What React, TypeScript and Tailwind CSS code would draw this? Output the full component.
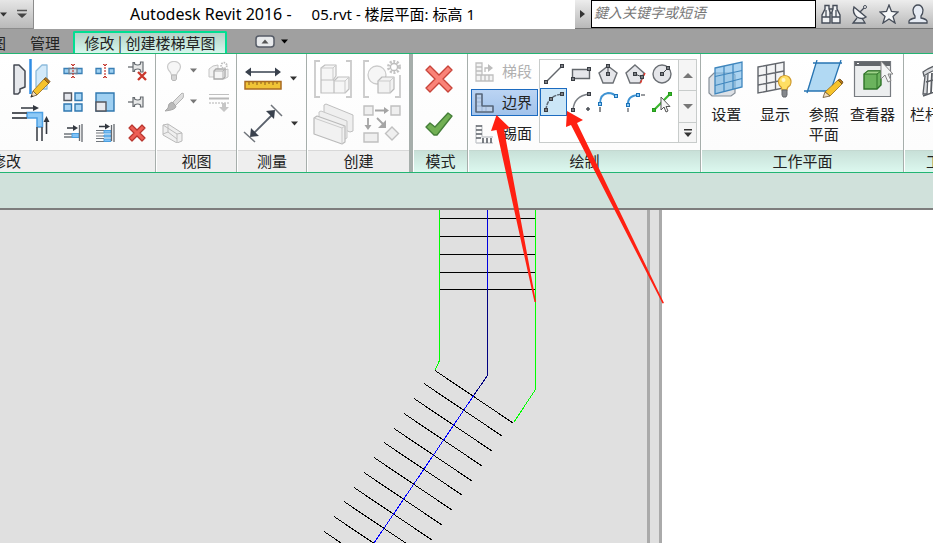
import type { ReactNode } from "react";
import clsx from "clsx";

type IconProps = { w?: number; h?: number; children: ReactNode };

function Icon({ w = 20, h = 20, children }: IconProps) {
  return (
    <svg width={w} height={h} viewBox={`0 0 ${w} ${h}`} fill="none" className="shrink-0" aria-hidden="true">
      {children}
    </svg>
  );
}

function Caret({ className = "text-[#333]" }: { className?: string }) {
  return (
    <svg width="7" height="5" viewBox="0 0 7 5" className={clsx("shrink-0", className)} aria-hidden="true">
      <path d="M0 0.5h7L3.5 4.5z" fill="currentColor" />
    </svg>
  );
}

/* ---------- Modify icons ---------- */

const MirrorIcon = () => (
  <Icon w={40} h={42}>
    <path d="M3 6h5l6 6v16l-5 2v3l-2 2H3z" fill="#e6e8ec" stroke="#454a53" strokeWidth="1.500" strokeLinejoin="round" />
    <path d="M36 6h-5l-6 6v16l5 2h6z" fill="#d3eafa" stroke="#8dbbdb" strokeWidth="1.300" strokeLinejoin="round" />
    <path d="M19.500 0v35" stroke="#2f8de4" strokeWidth="2.500" />
    <path d="M22 32L33 20l5 4-12 12z" fill="#f6c32c" stroke="#94691c" strokeWidth=".8" />
    <path d="M33 20l2-1.500 4 4-1.500 2z" fill="#b4761a" stroke="#6c4a16" strokeWidth=".8" />
    <path d="M20 38l2-6 4 4z" fill="#f3dfbd" stroke="#6b5430" strokeWidth=".8" />
    <path d="M19.500 38.500l1-3 2 2z" fill="#333" />
  </Icon>
);

const TrimIcon = () => (
  <Icon w={40} h={40}>
    <path d="M10 3h14M35.500 29V15" stroke="#333840" strokeWidth="1.600" />
    <path d="M22 0l6 3-6 3zM32.500 17l3-6 3 6z" fill="#333840" />
    <path d="M16 7.500h15.500V22h-5.500v-9H16z" fill="#8fcaf6" stroke="#4da0e4" strokeWidth="1.500" />
    <path d="M1 8h15M1 13h15M26 22v14M31 22v14" stroke="#55595f" strokeWidth="1.800" />
  </Icon>
);

const SplitIcon = () => (
  <Icon>
    <path d="M1 7.500h6v5H1zM13 7.500h6v5h-6z" fill="#9ed0f2" stroke="#3a7fb5" strokeWidth="1.300" />
    <path d="M6 7.500h8v5H6z" fill="#d3e1ec" stroke="#6d8093" strokeWidth="1.300" />
    <path d="M10 3v14" stroke="#c4362c" strokeWidth="1.200" strokeDasharray="2 1" />
    <path d="M8 3l2 2 2-2M8 17l2-2 2 2" stroke="#c4362c" />
  </Icon>
);

const SplitGapIcon = () => (
  <Icon>
    <path d="M1 7.500h5v5H1zM14 7.500h5v5h-5z" fill="#9ed0f2" stroke="#3a7fb5" strokeWidth="1.300" />
    <path d="M10 3v14" stroke="#c4362c" strokeWidth="1.200" strokeDasharray="2 1" />
    <path d="M8 3l2 2 2-2M8 17l2-2 2 2" stroke="#c4362c" />
  </Icon>
);

function PushPin() {
  return (
    <>
      <path d="M1 10h5" stroke="#666b70" strokeWidth="1.300" />
      <path d="M6 5.500h1.500V7q3.500 2 6 0V5h2.500v10h-2.500v-2q-2.500-2-6 0v1.500H6z" fill="#e7e8e8" stroke="#666b70" strokeWidth="1.200" />
    </>
  );
}

const UnpinIcon = () => (
  <Icon>
    <g transform="translate(0 -4)"><PushPin /></g>
    <path d="M11 11l8 8M19 11l-8 8" stroke="#c9372b" strokeWidth="2.300" />
  </Icon>
);

const PinIcon = () => (
  <Icon>
    <PushPin />
  </Icon>
);

const ArrayIcon = () => (
  <Icon>
    <path d="M1 1h7.500v7.500H1z" fill="#e4e6ec" stroke="#55575e" strokeWidth="1.400" />
    <path d="M12 1h7v7.500h-7zM1 12h7.500v7H1zM12 12h7v7h-7z" fill="#a9d6f5" stroke="#3078b0" strokeWidth="1.400" />
  </Icon>
);

const ScaleIcon = () => (
  <Icon>
    <path d="M1 1h18v18H1z" fill="#9fd0f2" stroke="#3078b0" strokeWidth="1.400" />
    <path d="M1 10h10v9H1z" fill="#e9eaee" stroke="#55575e" strokeWidth="1.400" />
  </Icon>
);

const ExtendIcon = () => (
  <Icon>
    <path d="M4 5h8" stroke="#333840" strokeWidth="1.500" />
    <path d="M10 2l5 3-5 3z" fill="#333840" />
    <path d="M1 11h8M1 14h8" stroke="#70757b" strokeWidth="1.300" />
    <path d="M9 10.500h7v4H9z" fill="#7fc1f6" stroke="#4a9fe0" />
    <path d="M16.500 2v16M19 1v18" stroke="#666a70" strokeWidth="1.300" />
  </Icon>
);

const ExtendManyIcon = () => (
  <Icon>
    <path d="M4 3.500h8" stroke="#333840" strokeWidth="1.500" />
    <path d="M10 .5l5 3-5 3z" fill="#333840" />
    <path d="M1 7.500h8M1 10h8M1 13h8M1 15.500h8M1 18.500h8" stroke="#70757b" strokeWidth="1.100" />
    <path d="M9 7.500h7V10H9zM9 12h7v2H9zM9 16h7v2.500H9z" fill="#7fc1f6" stroke="#4a9fe0" />
    <path d="M16.500 2v16M19 1v18" stroke="#666a70" strokeWidth="1.300" />
  </Icon>
);

const DeleteIcon = () => (
  <Icon>
    <path
      d="M5 2l5 5 5-5 3 3-5 5 5 5-3 3-5-5-5 5-3-3 5-5-5-5z"
      fill="#ed5f55"
      stroke="#b8352e"
      strokeWidth="1.200"
      strokeLinejoin="round"
    />
  </Icon>
);

/* ---------- View icons (disabled) ---------- */

const BulbIcon = () => (
  <Icon>
    <path d="M7.500 14q-.5-2.500-3-5Q2 4 6 1.500q4-2 8 0Q18 4 15.500 9q-2.500 2.500-3 5z" fill="#f6f6f6" stroke="#cacaca" strokeWidth="1.200" />
    <path d="M7.500 14h5v4l-1 1.500h-3l-1-1.500z" fill="#d6d6d6" stroke="#b8b8b8" />
  </Icon>
);

const HideCubeIcon = () => (
  <Icon w={22}>
    <path d="M1 8l4-3 5-1v4l-3 8H1zM17 9l3-1v8l-4 2" fill="#f1f1f1" stroke="#c5c5c5" />
    <path d="M6 10l2-2h9v8l-2 2H6z" fill="#f4f4f4" stroke="#a8a8a8" strokeWidth="1.300" />
    <path d="M6 10h9v8M15 10l2-2" stroke="#b0b0b0" />
    <circle cx="16" cy="4.500" r="2.800" fill="#fff" stroke="#bdbdbd" strokeWidth="1.800" strokeDasharray="1.500 1" />
  </Icon>
);

const BrushIcon = () => (
  <Icon>
    <path d="M9 10L18 1l2 1-1 4-8 8z" fill="#dedede" stroke="#b4b4b4" />
    <path d="M8 10l4 4q0 4-11 5l3-3q0-5 4-6z" fill="#b9b9b9" stroke="#a8a8a8" />
  </Icon>
);

const LineworkIcon = () => (
  <Icon w={22}>
    <path d="M1 2.500h20" stroke="#c0c0c0" />
    <path d="M1 6.500h20" stroke="#b8b8b8" strokeWidth="2" />
    <path d="M1 11h20" stroke="#b2b2b2" strokeDasharray="2 1" />
    <path d="M14 11h4v4h3l-5 5-5-5h3z" fill="#c6c6c6" />
  </Icon>
);

const SelectionBoxIcon = () => (
  <Icon w={22}>
    <path d="M1 2l5-1 14 9v8l-5 2L1 12z" fill="#efefef" stroke="#b9b9b9" strokeLinejoin="round" />
    <path d="M1 2l14 9 5-1M15 11v9M6 1v8l9 7M6 9l-5 2" stroke="#bdbdbd" />
  </Icon>
);

/* ---------- Measure icons ---------- */

const RulerIcon = () => (
  <Icon w={38} h={26}>
    <path d="M5 6h28" stroke="#59606b" strokeWidth="1.800" />
    <path d="M7 1.500v9L1 6zM31 1.500v9L37 6z" fill="#39414d" />
    <path d="M1 15.500h36v7.500H1z" fill="#f0c437" stroke="#a96b22" strokeWidth="1.500" />
    <path d="M5 16v3M9 16v2M13 16v3M17 16v2M21 16v3M25 16v2M29 16v3M33 16v2" stroke="#8b5b1d" />
  </Icon>
);

const AlignedDimensionIcon = () => (
  <Icon w={40} h={40}>
    <path d="M9 31L30 10" stroke="#59606b" strokeWidth="1.800" />
    <path d="M7 33l1-9 8 8zM32 6l-9 1 8 8z" fill="#39414d" />
    <path d="M1 28l11 10M28 1l11 11" stroke="#70757b" strokeWidth="1.500" />
  </Icon>
);

/* ---------- Create icons (disabled) ---------- */

const GroupIcon = () => (
  <Icon w={40} h={40}>
    <path d="M7 2H2v36h5M33 2h5v36h-5" stroke="#cbcbcb" strokeWidth="1.800" />
    <path d="M8 9l4-3h11v11l-3 4H8zM8 21h13v13H8zM21 22l4-4h11v12l-4 4H21z" fill="#f6f6f6" stroke="#bfbfbf" strokeWidth="1.200" strokeLinejoin="round" />
    <path d="M8 9h12l3-3M20 9v12M21 22h11l4-4M32 22v12" stroke="#cbcbcb" />
  </Icon>
);

const AssemblyIcon = () => (
  <Icon w={40} h={40}>
    <path d="M7 2H2v36h5M38 16v22h-5" stroke="#cbcbcb" strokeWidth="1.800" />
    <circle cx="15" cy="16" r="9" fill="#f6f6f6" stroke="#cbcbcb" strokeWidth="1.300" />
    <path d="M16 22l4-4h12v12l-4 4H16z" fill="#f2f2f2" stroke="#b8b8b8" strokeWidth="1.200" strokeLinejoin="round" />
    <path d="M16 22h12l4-4M28 22v12" stroke="#cbcbcb" />
    <circle cx="32" cy="8" r="5.500" stroke="#c4c4c4" strokeWidth="3" strokeDasharray="2 1.500" />
    <circle cx="32" cy="8" r="3.500" fill="#fff" stroke="#bdbdbd" strokeWidth="1.300" />
  </Icon>
);

const PartsIcon = () => (
  <Icon w={42} h={42}>
    <path d="M12 2l2-1 27 11v16l-3 1-26-11z" fill="#efefef" stroke="#bfbfbf" strokeLinejoin="round" />
    <path d="M7 9l2-1 26 10v17l-2 1L7 26z" fill="#efefef" stroke="#c7c7c7" strokeLinejoin="round" />
    <path d="M2 15l3-2 28 10v16l-3 2L2 31z" fill="#f1f1f1" stroke="#bababa" strokeWidth="1.200" strokeLinejoin="round" />
    <path d="M2 15l28 10 3-2M30 25v16" stroke="#cbcbcb" />
  </Icon>
);

const SimilarIcon = () => (
  <Icon w={40} h={40}>
    <path d="M2 2h9v9H2zM29 2h9v9h-9zM2 29h14v9H2zM30 23l6.500 6.500L30 36l-6.500-6.500z" fill="#efefef" stroke="#c0c0c0" strokeWidth="1.400" />
    <path d="M13 6.500h10M6 14v8M15 14l6 6" stroke="#a5a5a5" strokeWidth="1.800" />
    <path d="M22 3l5 3.500-5 3.500zM2.500 21h7L6 26zM24 16v8h-8z" fill="#a5a5a5" />
  </Icon>
);

/* ---------- Mode icons ---------- */

const CancelIcon = () => (
  <Icon w={30} h={30}>
    <path
      d="M6 2l9 9 9-9 4 4-9 9 9 9-4 4-9-9-9 9-4-4 9-9-9-9z"
      fill="#fa8378"
      stroke="#c8443b"
      strokeWidth="1.400"
      strokeLinejoin="round"
    />
  </Icon>
);

const FinishIcon = () => (
  <Icon w={30} h={30}>
    <path
      d="M2 18l4-4 5 4L24 4l4 3-15 19h-3z"
      fill="#72b054"
      stroke="#457f39"
      strokeWidth="1.400"
      strokeLinejoin="round"
    />
  </Icon>
);

/* ---------- Draw icons ---------- */

const RunIcon = () => (
  <Icon>
    <path d="M2 1h6v12h11v6H2z" fill="#f4f4f4" stroke="#c0c0c0" strokeWidth="1.300" />
    <path d="M2 5h6M2 9h6M2 13h6M7 13v6M11 13v6M15 13v6M11 10V6h5" stroke="#bdbdbd" strokeWidth="1.300" />
    <path d="M14 2l5 4-5 4z" fill="#bdbdbd" />
  </Icon>
);

const BoundaryIcon = () => (
  <Icon>
    <path d="M2 1h6v12h11v6H2z" fill="#bcd0ea" stroke="#56657a" strokeWidth="1.600" strokeLinejoin="round" />
    <path d="M3 5h4M3 9h4M3 13h4M8 14v4M12 14v4" stroke="#98b2d3" />
  </Icon>
);

const RiserIcon = () => (
  <Icon>
    <path d="M2 1v18M8 1v12h11M2 19h17" stroke="#c6c9cd" strokeWidth="1.300" />
    <path d="M2 2h6M2 6h6M2 10h6M2 14h5M9 14v5M13 14v5M17 14v5" stroke="#5b6067" strokeWidth="1.600" />
  </Icon>
);

const Node = ({ x, y, blue, green }: { x: number; y: number; blue?: boolean; green?: boolean }) => (
  <rect
    x={x - 1.5}
    y={y - 1.5}
    width="3"
    height="3"
    fill={blue ? "#8ec9f5" : green ? "#36b52a" : "#7d8085"}
    stroke={blue ? "#1a72b8" : green ? "#259a1b" : "#3a3e44"}
  />
);

const drawTools = [
  {
    name: "线",
    icon: (
      <Icon w={22} h={22}>
        <path d="M3 19L19 3" stroke="#63676c" strokeWidth="1.500" />
        <Node x={3} y={19} />
        <Node x={19} y={3} />
      </Icon>
    ),
  },
  {
    name: "矩形",
    icon: (
      <Icon w={22} h={22}>
        <path d="M2.500 6.500h17v9h-17z" fill="#e5e6ea" stroke="#63676c" strokeWidth="1.400" />
        <Node x={3} y={16} />
        <Node x={19} y={6} />
      </Icon>
    ),
  },
  {
    name: "内接多边形",
    icon: (
      <Icon w={22} h={22}>
        <path d="M11 3l9 7-4 10H6L2 10z" fill="#e5e6ea" stroke="#6b6f74" strokeWidth="1.400" />
        <path d="M11 3v8" stroke="#43474d" />
        <Node x={11} y={3} />
        <Node x={11} y={11} />
      </Icon>
    ),
  },
  {
    name: "外接多边形",
    icon: (
      <Icon w={22} h={22}>
        <path d="M11 2l9 8-4 10H6L2 10z" fill="#e5e6ea" stroke="#6b6f74" strokeWidth="1.400" />
        <path d="M11 11l7 3" stroke="#43474d" />
        <path d="M21 10l-5 11" stroke="#df382d" strokeWidth="1.500" strokeDasharray="3 1" />
        <Node x={11} y={11} />
        <Node x={18} y={14} />
      </Icon>
    ),
  },
  {
    name: "圆形",
    icon: (
      <Icon w={22} h={22}>
        <circle cx="11" cy="11" r="9" fill="#e5e6ea" stroke="#6b6f74" strokeWidth="1.400" />
        <path d="M11 11l6-6" stroke="#43474d" />
        <Node x={11} y={11} />
        <Node x={17} y={5} />
      </Icon>
    ),
  },
  {
    name: "起点-终点-半径弧",
    icon: (
      <Icon w={22} h={22}>
        <path d="M3 19Q4 5 19 3" stroke="#5c6975" strokeWidth="1.500" strokeDasharray="4 1" />
        <Node x={3} y={19} />
        <Node x={8} y={8} />
        <Node x={19} y={3} />
      </Icon>
    ),
  },
  {
    name: "圆心-端点弧",
    icon: (
      <Icon w={22} h={22}>
        <path d="M3 19Q4 5 19 3" stroke="#7c8086" strokeWidth="1.500" />
        <path d="M18 16v4M16 18h4" stroke="#4b4f55" strokeWidth="1.500" />
        <Node x={3} y={19} />
        <Node x={19} y={3} />
      </Icon>
    ),
  },
  {
    name: "相切-端点弧",
    icon: (
      <Icon w={22} h={22}>
        <path d="M3 13Q3 3 11 2q6 0 8 4" stroke="#3f93d3" strokeWidth="1.800" />
        <path d="M3 16v5" stroke="#63676c" strokeWidth="1.500" />
        <Node x={3} y={13} blue />
        <Node x={19} y={5} blue />
      </Icon>
    ),
  },
  {
    name: "圆角弧",
    icon: (
      <Icon w={22} h={22}>
        <path d="M4 14Q3 5 14 4" stroke="#3f93d3" strokeWidth="1.800" />
        <path d="M4 17v4M17 4h4" stroke="#777b80" strokeWidth="1.500" />
        <Node x={4} y={14} blue />
        <Node x={14} y={4} blue />
      </Icon>
    ),
  },
  {
    name: "拾取线",
    icon: (
      <Icon w={22} h={22}>
        <path d="M3 19L19 3" stroke="#3ab62d" strokeWidth="2.200" />
        <Node x={3} y={19} green />
        <Node x={19} y={3} green />
        <path d="M10 6v13l3-3 2 5 2-1-2-4.500h4z" fill="#f6f6f6" stroke="#555" />
      </Icon>
    ),
  },
];

/* ---------- Work plane icons ---------- */

const SetPlaneIcon = () => (
  <Icon w={38} h={38}>
    <path d="M2 18l5-5h19l2 2v18l-4 3H5l-3-3z" fill="#dde1e6" stroke="#868f98" strokeWidth="1.200" />
    <path d="M8 8l27-6v25L8 34z" fill="#7fbdea" fillOpacity=".65" stroke="#3f86bd" strokeWidth="1.300" />
    <path d="M17 6v26M26 4v25M8 16.500l27-6M8 25.500l27-7" stroke="#3f86bd" strokeWidth="1.200" />
  </Icon>
);

const ShowPlaneIcon = () => (
  <Icon w={38} h={38}>
    <path d="M2 7l26-5v26L2 33z" fill="#f3f4f5" stroke="#62666c" strokeWidth="1.400" />
    <path d="M10.500 5.500v26M19.500 4v26M2 16l26-5M2 25l26-5" stroke="#62666c" strokeWidth="1.300" />
    <path d="M26 30q0-3-2.500-4.500-2.500-5 1-8.500 4.500-3 8.500 0 3.500 4 1 8.500Q31 27 31 30z" fill="#ffdf63" stroke="#cf9a2c" strokeWidth="1.200" />
    <path d="M26 30h5v5l-1 2h-3l-1-2z" fill="#85888c" stroke="#63666a" />
    <circle cx="27.500" cy="20" r="2" fill="#fff7c8" />
  </Icon>
);

const RefPlaneIcon = () => (
  <Icon w={40} h={38}>
    <path d="M12 3h24L26 31H3z" fill="#b1d9f3" />
    <path d="M9 3h29M13 0L3 33M37 0L26 33M0 31h27" stroke="#2774b2" strokeWidth="1.300" />
    <path d="M21 32l13-12 4 4-12 12z" fill="#f6c32c" stroke="#94691c" strokeWidth=".8" />
    <path d="M19 37.500l2-5.500 5 4z" fill="#f3dfbd" stroke="#6b5430" strokeWidth=".8" />
    <path d="M34 20l2-1 3 3-1 2z" fill="#b4761a" stroke="#6c4a16" strokeWidth=".8" />
  </Icon>
);

const ViewerIcon = () => (
  <Icon w={40} h={38}>
    <path d="M1.500 1.500h36v35h-36z" fill="#eceeef" stroke="#777b80" strokeWidth="1.200" />
    <path d="M2 1.500h35V6H2z" fill="#63676c" />
    <path d="M4 3.500h2" stroke="#fff" />
    <path d="M11 14l4-3h13v14l-4 4H11z" fill="#6bb35d" stroke="#2e7429" strokeWidth="1.400" />
    <path d="M11 14l4-3h13l-4 3z" fill="#a0d38a" stroke="#2e7429" />
    <path d="M24 14v15" stroke="#2e7429" />
    <path d="M28 1v18l4-4 3 7 3-1.500-3-6.500h5z" fill="#f4f5f6" stroke="#858585" />
  </Icon>
);

const RailingIcon = () => (
  <Icon w={38} h={38}>
    <path d="M2 12Q14 3 36 2v4Q15 7 3 16z" fill="#d8dadd" stroke="#5a5e64" strokeWidth="1.300" />
    <path d="M4 16L2 34h4l1-20" fill="#d8dadd" stroke="#5a5e64" strokeWidth="1.300" />
    <path d="M11 13l-1 20M15 11l-1 20M23 8v20M30 7v19" stroke="#5a5e64" strokeWidth="1.800" />
    <path d="M2 36l35-12M5 22l32-9" stroke="#5a5e64" strokeWidth="1.500" />
  </Icon>
);

/* ---------- Title bar icons ---------- */

const BinocularsIcon = () => (
  <Icon>
    <path d="M4 1.500h4V5l1 3v11H1v-8l3-6zM12 1.500h4V5l3 6v8h-8V8l1-3z" fill="#f0f2f4" stroke="#464d59" strokeWidth="1.400" />
    <path d="M8 5h4M9 9h2M1 13h8M11 13h8M5 6v7M15 6v7" stroke="#464d59" strokeWidth="1.300" />
  </Icon>
);

const SatelliteIcon = () => (
  <Icon>
    <path d="M7 14l-4 5h12l-3-5" fill="#d5d9dd" stroke="#464d59" strokeWidth="1.300" />
    <path d="M4 3l12 10q-4 3-9 0-5-4-3-10z" fill="#f4f5f7" stroke="#464d59" strokeWidth="1.400" />
    <path d="M10 8l4-4" stroke="#464d59" strokeWidth="1.300" />
    <circle cx="15" cy="3" r="1.500" fill="#fff" stroke="#464d59" />
  </Icon>
);

const StarIcon = () => (
  <Icon>
    <path d="M10 1l2.500 6.500 6.500.5-5 4.500 2 6.500-6-4-6 4 2-6.500L1 8l6.500-.5z" fill="#f7f8f9" stroke="#464d59" strokeWidth="1.300" />
  </Icon>
);

const UserIcon = () => (
  <Icon>
    <path d="M1 19v-2q1-2 6-3v-2Q5 10 5 6q1-5 5-5t5 5q0 4-2 6v2q5 1 6 3v2z" fill="#e6ebf3" stroke="#464d59" strokeWidth="1.300" />
  </Icon>
);

/* ---------- Layout ---------- */

type PanelProps = { title: string; className: string; contextual?: boolean; titleClass?: string; children: ReactNode };

function Panel({ title, className, contextual, titleClass = "text-center", children }: PanelProps) {
  return (
    <section className={clsx("mr-px flex shrink-0 flex-col border-[#a6aeab]", className)}>
      <div className="h-24 bg-gradient-to-b from-white to-[#fcfcfc]">{children}</div>
      <h2
        className={clsx(
          "h-[22px] overflow-hidden border-t text-[15px] leading-5 whitespace-nowrap",
          contextual
            ? "border-[#c3d8d0] bg-gradient-to-b from-[#c8e0d8] to-[#dcf8ef]"
            : "border-[#d8d8d8] bg-[#eeeeee]",
          titleClass
        )}
      >
        {title}
      </h2>
    </section>
  );
}

function Tool({ label, className, children }: { label: string; className?: string; children: ReactNode }) {
  return (
    <button type="button" aria-label={label} className={clsx("flex items-center justify-center", className)}>
      {children}
    </button>
  );
}

const modifyTools = [
  { name: "拆分图元", icon: <SplitIcon /> },
  { name: "用间隙拆分", icon: <SplitGapIcon /> },
  { name: "解锁", icon: <UnpinIcon /> },
  { name: "阵列", icon: <ArrayIcon /> },
  { name: "缩放", icon: <ScaleIcon /> },
  { name: "锁定", icon: <PinIcon /> },
  { name: "修剪/延伸单个图元", icon: <ExtendIcon /> },
  { name: "修剪/延伸多个图元", icon: <ExtendManyIcon /> },
  { name: "删除", icon: <DeleteIcon /> },
];

const planeTools = [
  { lines: ["设置"], icon: <SetPlaneIcon /> },
  { lines: ["显示"], icon: <ShowPlaneIcon /> },
  { lines: ["参照", "平面"], icon: <RefPlaneIcon /> },
  { lines: ["查看器"], icon: <ViewerIcon /> },
];

function TitleBar() {
  return (
    <header className="flex h-[29px] items-start bg-white">
      <div className="flex h-[29px] w-[34px] shrink-0 items-center justify-between border-r border-b border-[#8c8c8c] bg-gradient-to-b from-[#e6e6e6] to-[#b9b9b9] pr-[5px]">
        <button type="button" aria-label="更多">
          <Caret />
        </button>
        <button type="button" aria-label="自定义快速访问工具栏">
          <Icon w={12} h={10}>
            <path d="M1 1.500h10" stroke="#555" strokeWidth="1.500" />
            <path d="M1 4.500h10L6 9z" fill="#444" />
          </Icon>
        </button>
      </div>
      <h1 className="flex min-w-0 flex-1 gap-5 overflow-hidden pl-24 font-['Noto_Sans','Noto_Sans_CJK_SC',sans-serif] text-[15px] leading-[29px] whitespace-nowrap text-black">
        <span className="text-[16px]">Autodesk Revit 2016 -</span>
        <span>05.rvt - 楼层平面: 标高 1</span>
      </h1>
      <div className="flex h-[29px] w-[358px] shrink-0 items-start border-b border-[#777] bg-gradient-to-b from-[#ededed] to-[#b8b8b8]">
        <button type="button" aria-label="展开" className="flex h-7 w-4 items-center justify-center">
          <Icon w={6} h={8}>
            <path d="M0 0v8l5-4z" fill="#333" />
          </Icon>
        </button>
        <input
          type="text"
          aria-label="搜索"
          placeholder="鍵入关键字或短语"
          className="h-7 w-[225px] border border-black bg-white px-[2px] pb-1 text-[14px] italic outline-none placeholder:text-[#777]"
        />
        <div className="flex h-7 flex-1 items-center justify-around">
          <Tool label="搜索"><BinocularsIcon /></Tool>
          <Tool label="通讯中心"><SatelliteIcon /></Tool>
          <Tool label="收藏夹"><StarIcon /></Tool>
          <Tool label="登录"><UserIcon /></Tool>
        </div>
      </div>
    </header>
  );
}

function Tabs() {
  return (
    <nav className="flex h-[25px] items-end border-b border-[#22b573] bg-[#a0a0a0] text-[15px] leading-[21px]">
      <button type="button" className="-ml-[9px] w-[39px] text-left">图</button>
      <button type="button" className="w-[43px] text-left">管理</button>
      <button
        type="button"
        className="w-[154px] rounded-t-xs border-2 border-b-0 border-[#00df92] bg-gradient-to-b from-[#b4d2c7] to-[#d6f7ed] leading-5 whitespace-nowrap"
      >
        修改 | 创建楼梯草图
      </button>
      <button type="button" aria-label="最小化功能区" className="ml-7 flex h-6 items-center gap-[6px]">
        <Icon w={20} h={13}>
          <rect x="1" y="1" width="18" height="11" rx="3" fill="#e8eaec" stroke="#555b66" strokeWidth="1.500" />
          <path d="M6.500 8.500h7L10 4.500z" fill="#555" />
        </Icon>
        <Caret className="text-black" />
      </button>
    </nav>
  );
}

function Ribbon() {
  return (
    <div className="flex h-[119px] overflow-hidden border-b border-[#22b573] bg-white">
      <Panel title="修改" className="w-[156px] border-r" titleClass="-indent-[9px]">
        <div className="flex pt-px">
          <div className="flex w-[57px] flex-col gap-1 pt-1 pl-[11px]">
            <Tool label="镜像" className="w-10"><MirrorIcon /></Tool>
            <Tool label="修剪" className="w-10"><TrimIcon /></Tool>
          </div>
          <div className="grid grid-cols-[32px_32px_32px]">
            {modifyTools.map((t) => (
              <Tool key={t.name} label={t.name} className="h-[31px]">{t.icon}</Tool>
            ))}
          </div>
        </div>
      </Panel>

      <Panel title="视图" className="w-[80px] border-r">
        <div className="grid grid-cols-[42px_32px] pt-px pl-1">
          <Tool label="隐藏" className="h-[31px] gap-[6px] pr-1"><BulbIcon /><Caret className="text-[#777]" /></Tool>
          <Tool label="置换图元"><HideCubeIcon /></Tool>
          <Tool label="替换" className="h-[31px] gap-[6px] pr-1"><BrushIcon /><Caret className="text-[#777]" /></Tool>
          <Tool label="线处理"><LineworkIcon /></Tool>
          <Tool label="选择框" className="h-[31px] w-6"><SelectionBoxIcon /></Tool>
        </div>
      </Panel>

      <Panel title="测量" className="w-[69px] border-r">
        <div className="flex flex-col pt-[2px] pr-[3px]">
          <Tool label="测量" className="h-[45px] gap-2"><RulerIcon /><Caret /></Tool>
          <Tool label="对齐尺寸标注" className="h-[45px] gap-2"><AlignedDimensionIcon /><Caret /></Tool>
        </div>
      </Panel>

      <Panel title="创建" className="w-[105px] border-r-4">
        <div className="grid grid-cols-2 pt-[2px] pr-[3px]">
          <Tool label="创建组" className="h-[45px]"><GroupIcon /></Tool>
          <Tool label="创建部件" className="h-[45px]"><AssemblyIcon /></Tool>
          <Tool label="创建零件" className="h-[45px]"><PartsIcon /></Tool>
          <Tool label="创建类似" className="h-[45px]"><SimilarIcon /></Tool>
        </div>
      </Panel>

      <Panel title="模式" contextual className="w-[54px] border-r">
        <div className="flex flex-col pt-[2px] pr-[3px]">
          <Tool label="取消" className="h-[45px]"><CancelIcon /></Tool>
          <Tool label="完成" className="h-[45px]"><FinishIcon /></Tool>
        </div>
      </Panel>

      <Panel title="绘制" contextual className="w-[232px] border-r">
        <div className="flex">
          <div className="flex w-[70px] flex-col gap-1 pt-1 pl-[2px] text-[15px]">
            <button type="button" disabled className="flex h-[27px] w-[67px] items-center gap-2 pl-[3px] whitespace-nowrap text-[#b0b0b0]">
              <RunIcon />梯段
            </button>
            <button type="button" className="flex h-[27px] w-[67px] items-center gap-2 border border-[#1c6bc0] bg-gradient-to-b from-[#bbd4f3] to-[#a2c3eb] pl-[2px] whitespace-nowrap">
              <BoundaryIcon />边界
            </button>
            <button type="button" className="flex h-[27px] w-[67px] items-center gap-2 pl-[3px] whitespace-nowrap">
              <RiserIcon />踢面
            </button>
          </div>
          <div className="mt-[5px] flex h-[84px] w-[158px] justify-between border border-[#c8cccb] bg-white">
            <div className="grid h-14 grid-cols-[27px_27px_27px_27px_27px]">
              {drawTools.map((t, i) => (
                <Tool
                  key={t.name}
                  label={t.name}
                  className={clsx("h-7", i === 5 && "border border-[#1c6bc0] bg-[#cbe6f7]")}
                >
                  {t.icon}
                </Tool>
              ))}
            </div>
            <div className="flex w-[18px] flex-col divide-y divide-[#c8cccb] border-l border-[#c8cccb] bg-[#f5f5f5]">
              <Tool label="上一行" className="h-[31px]">
                <Icon w={10} h={6}><path d="M0 6h10L5 1z" fill="#777" /></Icon>
              </Tool>
              <Tool label="下一行" className="h-8">
                <Icon w={10} h={6}><path d="M0 0h10L5 5z" fill="#777" /></Icon>
              </Tool>
              <Tool label="更多" className="flex-1">
                <Icon w={8} h={8}><path d="M0 0h8v1.500H0zM0 3.500h8L4 8z" fill="#333" /></Icon>
              </Tool>
            </div>
          </div>
        </div>
      </Panel>

      <Panel title="工作平面" contextual className="w-[202px] border-r">
        <div className="grid grid-cols-4 pt-[6px] pr-[6px]">
          {planeTools.map((t) => (
            <button key={t.lines[0]} type="button" className="flex flex-col items-center gap-[6px] text-[15px] leading-5">
              {t.icon}
              <span className="whitespace-nowrap">
                {t.lines.map((l) => (
                  <span key={l} className="block">{l}</span>
                ))}
              </span>
            </button>
          ))}
        </div>
      </Panel>

      <Panel title="工具" contextual className="w-[73px] border-r">
        <button type="button" className="flex w-full flex-col items-center gap-[6px] pt-[6px] pr-[2px] text-[15px] leading-5 whitespace-nowrap">
          <RailingIcon />
          栏杆扶手
        </button>
      </Panel>
    </div>
  );
}

// start point of every riser on the lower flight, each one spans (78, 52)
const risers = [
  [435, 160], [424, 173], [414, 188], [404, 203], [394, 218], [384, 232],
  [374, 247], [364, 262], [354, 277], [344, 291], [334, 306], [324, 321],
];

function Canvas() {
  return (
    <main className="flex flex-1 overflow-hidden bg-white">
      <div className="flex w-[662px] shrink-0 justify-end bg-[#e0e0e0]">
        <svg width="647" height="333" viewBox="0 0 647 333" fill="none" shapeRendering="crispEdges" className="shrink-0">
          {[8, 26, 44, 62, 79].map((y) => (
            <path key={y} d={`M439 ${y}.5h97`} stroke="#000" />
          ))}
          {risers.map(([x, y]) => (
            <path key={x} d={`M${x} ${y}.5l78 52.500`} stroke="#000" />
          ))}
          <path d="M439.500 0v150.500L435 160M535.500 0v179.500L514 212" stroke="#00ff00" />
          <path d="M487.500 0v80" stroke="#0000e0" />
          <path d="M487.500 80v85.500L474 185" stroke="#000080" />
          <path d="M474 185L374 333" stroke="#0000ff" />
        </svg>
        <div className="w-[15px] shrink-0 border-r-[3px] border-l-[3px] border-[#aaaaaa]" />
      </div>
    </main>
  );
}

export default function App() {
  return (
    <div className="relative flex min-h-screen flex-col overflow-hidden font-['Noto_Sans_CJK_SC',sans-serif] text-[#222]">
      <TitleBar />
      <Tabs />
      <Ribbon />
      <div className="h-[37px] border-b-2 border-[#7d7d7d] bg-[#d0e1db]" />
      <Canvas />

      {/* Callout arrows */}
      <svg width="680" height="320" viewBox="0 0 680 320" className="pointer-events-none absolute top-0 left-0" fill="#ff2012">
        <path d="M496.500 115L510 128l-6 1.500L536 302h-1.500L496.500 130l-5.500 1z" />
        <path d="M567 111l16 9-6 3 87 180-1.500.5L571 125l-5 2z" />
      </svg>
    </div>
  );
}
